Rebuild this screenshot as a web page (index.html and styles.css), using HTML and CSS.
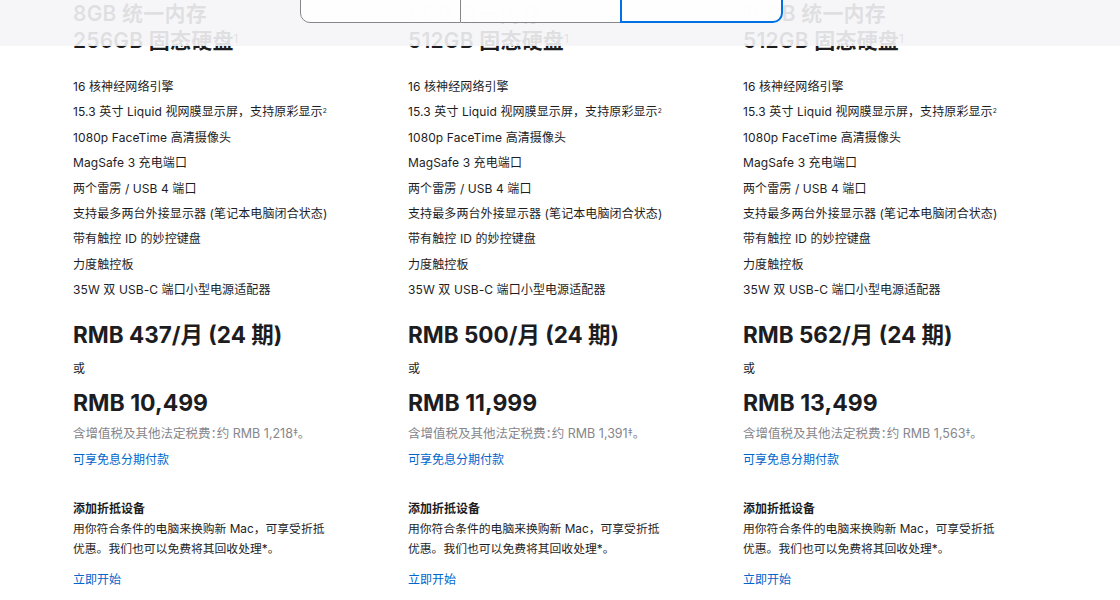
FILE: index.html
```html
<!DOCTYPE html>
<html lang="zh-CN">
<head>
  <meta charset="UTF-8">
  <meta name="viewport" content="width=device-width, initial-scale=1.0">
  <title>MacBook Air 15 英寸 - 比较机型</title>
  <link rel="stylesheet" href="styles.css">
</head>
<body>

  <!-- sticky chip selector that floats over the columns -->
  <div class="sticky-bar">
    <div class="segmented">
      <div class="segment"></div>
      <div class="segment"></div>
      <div class="segment selected"></div>
    </div>
  </div>

  <div class="models">

    <div class="model">
      <h2 class="model-title">8GB 统一内存<br>256GB 固态硬盘<sup>1</sup></h2>
      <ul class="specs">
        <li>16 核神经网络引擎</li>
        <li>15.3 英寸 Liquid 视网膜显示屏，支持原彩显示<sup>2</sup></li>
        <li>1080p FaceTime 高清摄像头</li>
        <li>MagSafe 3 充电端口</li>
        <li>两个雷雳 / USB 4 端口</li>
        <li>支持最多两台外接显示器 (笔记本电脑闭合状态)</li>
        <li>带有触控 ID 的妙控键盘</li>
        <li>力度触控板</li>
        <li>35W 双 USB-C 端口小型电源适配器</li>
      </ul>
      <p class="monthly">RMB 437/月 (24 期)</p>
      <p class="or">或</p>
      <p class="price">RMB 10,499</p>
      <p class="tax">含增值税及其他法定税费：约 RMB 1,218<span class="mark">‡</span>。</p>
      <a class="link" href="#">可享免息分期付款</a>
      <div class="trade-in">
        <h3>添加折抵设备</h3>
        <p>用你符合条件的电脑来换购新 Mac，可享受折抵优惠。我们也可以免费将其回收处理*。</p>
        <a class="link" href="#">立即开始</a>
      </div>
    </div>

    <div class="model">
      <h2 class="model-title">8GB 统一内存<br>512GB 固态硬盘<sup>1</sup></h2>
      <ul class="specs">
        <li>16 核神经网络引擎</li>
        <li>15.3 英寸 Liquid 视网膜显示屏，支持原彩显示<sup>2</sup></li>
        <li>1080p FaceTime 高清摄像头</li>
        <li>MagSafe 3 充电端口</li>
        <li>两个雷雳 / USB 4 端口</li>
        <li>支持最多两台外接显示器 (笔记本电脑闭合状态)</li>
        <li>带有触控 ID 的妙控键盘</li>
        <li>力度触控板</li>
        <li>35W 双 USB-C 端口小型电源适配器</li>
      </ul>
      <p class="monthly">RMB 500/月 (24 期)</p>
      <p class="or">或</p>
      <p class="price">RMB 11,999</p>
      <p class="tax">含增值税及其他法定税费：约 RMB 1,391<span class="mark">‡</span>。</p>
      <a class="link" href="#">可享免息分期付款</a>
      <div class="trade-in">
        <h3>添加折抵设备</h3>
        <p>用你符合条件的电脑来换购新 Mac，可享受折抵优惠。我们也可以免费将其回收处理*。</p>
        <a class="link" href="#">立即开始</a>
      </div>
    </div>

    <div class="model">
      <h2 class="model-title">16GB 统一内存<br>512GB 固态硬盘<sup>1</sup></h2>
      <ul class="specs">
        <li>16 核神经网络引擎</li>
        <li>15.3 英寸 Liquid 视网膜显示屏，支持原彩显示<sup>2</sup></li>
        <li>1080p FaceTime 高清摄像头</li>
        <li>MagSafe 3 充电端口</li>
        <li>两个雷雳 / USB 4 端口</li>
        <li>支持最多两台外接显示器 (笔记本电脑闭合状态)</li>
        <li>带有触控 ID 的妙控键盘</li>
        <li>力度触控板</li>
        <li>35W 双 USB-C 端口小型电源适配器</li>
      </ul>
      <p class="monthly">RMB 562/月 (24 期)</p>
      <p class="or">或</p>
      <p class="price">RMB 13,499</p>
      <p class="tax">含增值税及其他法定税费：约 RMB 1,563<span class="mark">‡</span>。</p>
      <a class="link" href="#">可享免息分期付款</a>
      <div class="trade-in">
        <h3>添加折抵设备</h3>
        <p>用你符合条件的电脑来换购新 Mac，可享受折抵优惠。我们也可以免费将其回收处理*。</p>
        <a class="link" href="#">立即开始</a>
      </div>
    </div>

  </div>

</body>
</html>
```

FILE: styles.css
```css
body {
  margin: 0;
  background: #fff;
  color: #1d1d1f;
  font-family: "Inter", "Noto Sans CJK SC", sans-serif;
  overflow: hidden;
}
h2, h3, p, ul {
  margin: 0;
}
sup {
  font-size: 0.55em;
  vertical-align: top;
  position: relative;
  top: -0.1em;
}

/* frosted bar with the chip picker */
.sticky-bar {
  position: fixed;
  top: 0;
  left: 0;
  right: 0;
  height: 46px;
  background: rgba(245, 245, 247, 0.9);
  z-index: 10;
}
.segmented {
  position: absolute;
  left: 300px;
  top: -20px;
  width: 483px;
  height: 43px;
  display: flex;
}
.segment {
  flex: 1;
  background: rgba(255, 255, 255, 0.94);
  border: 1px solid #86868b;
  border-left: none;
}
.segment:first-child {
  border-left: 1px solid #86868b;
  border-radius: 0 0 0 10px;
}
.segment.selected {
  border: 2px solid #0071e3;
  border-radius: 0 0 10px 0;
  margin-left: -1px;
}

.models {
  display: grid;
  grid-template-columns: repeat(3, 335px);
  padding-left: 73px;
}

.model-title {
  font-size: 21px;
  font-weight: 600;
  line-height: 27px;
  letter-spacing: 0.2px;
}
.model-title sup {
  font-weight: 400;
  top: -0.05em;
}
.specs {
  list-style: none;
  padding: 0;
  margin-top: 20px;
  font-size: 12px;
  line-height: 25.4px;
  letter-spacing: 0.1px;
}
.monthly {
  margin-top: 18px;
  font-size: 22.5px;
  font-weight: 700;
  line-height: 28px;
}
.or {
  margin-top: 11px;
  font-size: 12px;
  line-height: 18px;
}
.price {
  margin-top: 10px;
  font-size: 23px;
  font-weight: 700;
  line-height: 30px;
}
.tax {
  margin-top: 4px;
  font-size: 12.5px;
  line-height: 20px;
  color: #86868b;
  /* narrow colon like the store page */
  font-feature-settings: "halt";
}
.tax .mark {
  font-size: 10px;
  vertical-align: 2px;
}
.link {
  display: block;
  margin-top: 6px;
  font-size: 12px;
  line-height: 20px;
  color: #06c;
  text-decoration: none;
}
.trade-in {
  margin-top: 29px;
  width: 256px;
}
.trade-in h3 {
  font-size: 12px;
  font-weight: 700;
  line-height: 20px;
}
.trade-in p {
  font-size: 11.8px;
  line-height: 20px;
}
.trade-in .link {
  margin-top: 11px;
}
```
